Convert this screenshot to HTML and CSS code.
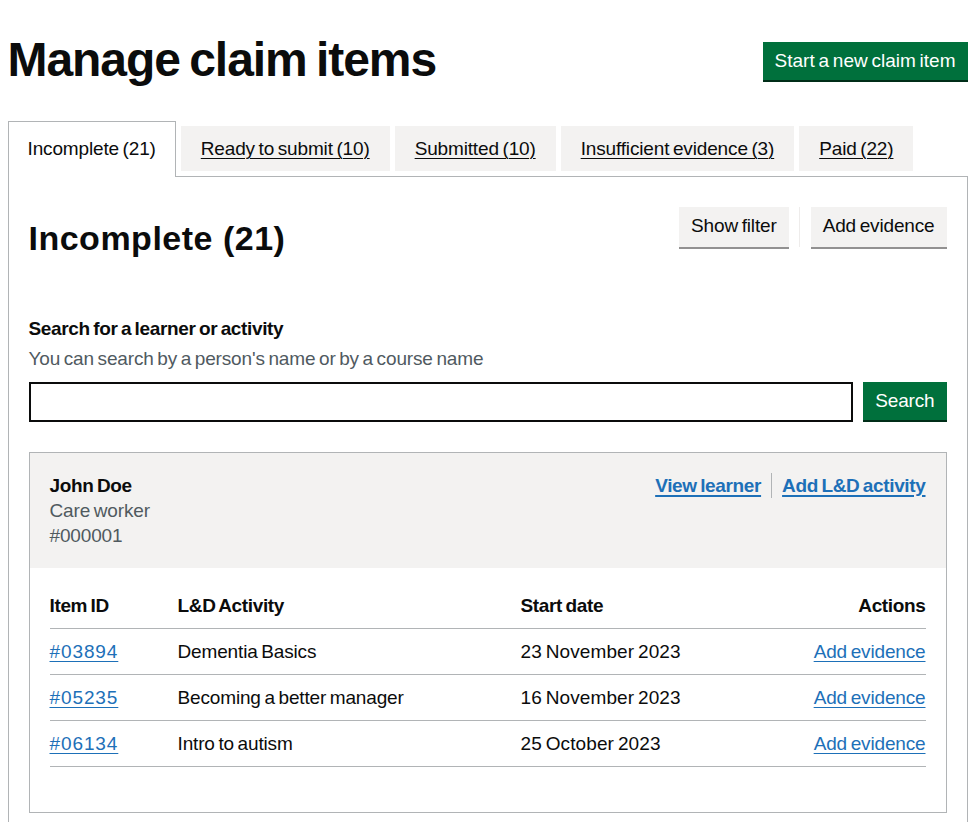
FILE: index.html
```html
<!DOCTYPE html>
<html lang="en">
<head>
<meta charset="utf-8">
<title>Manage claim items</title>
<link rel="stylesheet" href="styles.css">
</head>
<body>
<div class="container">
  <div class="page-header">
    <h1 class="heading-xl">Manage claim items</h1>
    <a class="button button-primary start-button" href="#">Start a new claim item</a>
  </div>

  <div class="tabs">
    <ul class="tabs-list">
      <li class="tab tab-selected"><a class="tab-link" href="#">Incomplete (21)</a></li>
      <li class="tab"><a class="tab-link" href="#">Ready to submit (10)</a></li>
      <li class="tab"><a class="tab-link" href="#">Submitted (10)</a></li>
      <li class="tab"><a class="tab-link" href="#">Insufficient evidence (3)</a></li>
      <li class="tab"><a class="tab-link" href="#">Paid (22)</a></li>
    </ul>

    <div class="panel">
      <div class="panel-header">
        <h2 class="heading-l">Incomplete (21)</h2>
        <div class="button-group">
          <a class="button button-secondary" href="#">Show filter</a>
          <span class="button-divider"></span>
          <a class="button button-secondary" href="#">Add evidence</a>
        </div>
      </div>

      <div class="search">
        <label class="label" for="search">Search for a learner or activity</label>
        <div class="hint">You can search by a person's name or by a course name</div>
        <div class="search-row">
          <input class="input" id="search" type="text">
          <a class="button button-primary search-button" href="#">Search</a>
        </div>
      </div>

      <div class="learner-card">
        <div class="learner-header">
          <div class="learner-info">
            <div class="learner-name">John Doe</div>
            <div class="learner-meta">Care worker</div>
            <div class="learner-meta">#000001</div>
          </div>
          <ul class="learner-actions">
            <li><a class="link link-bold" href="#">View learner</a></li>
            <li class="with-divider"><a class="link link-bold" href="#">Add L&amp;D activity</a></li>
          </ul>
        </div>
        <div class="learner-body">
          <table class="table">
            <colgroup>
              <col class="col-id">
              <col class="col-activity">
              <col class="col-date">
              <col class="col-actions">
            </colgroup>
            <thead>
              <tr>
                <th>Item ID</th>
                <th>L&amp;D Activity</th>
                <th>Start date</th>
                <th class="cell-right">Actions</th>
              </tr>
            </thead>
            <tbody>
              <tr>
                <td><a class="link link-num" href="#">#03894</a></td>
                <td>Dementia Basics</td>
                <td class="cell-date">23 November 2023</td>
                <td class="cell-right"><a class="link" href="#">Add evidence</a></td>
              </tr>
              <tr>
                <td><a class="link link-num" href="#">#05235</a></td>
                <td>Becoming a better manager</td>
                <td class="cell-date">16 November 2023</td>
                <td class="cell-right"><a class="link" href="#">Add evidence</a></td>
              </tr>
              <tr>
                <td><a class="link link-num" href="#">#06134</a></td>
                <td>Intro to autism</td>
                <td class="cell-date">25 October 2023</td>
                <td class="cell-right"><a class="link" href="#">Add evidence</a></td>
              </tr>
            </tbody>
          </table>
        </div>
      </div>
    </div>
  </div>
</div>
</body>
</html>
```

FILE: styles.css
```css
* {
  box-sizing: border-box;
}

html, body {
  margin: 0;
  padding: 0;
  background: #ffffff;
}

body {
  font-family: "Liberation Sans", Arial, sans-serif;
  font-size: 19px;
  line-height: 25px;
  color: #0b0c0c;
  letter-spacing: -0.15px;
  word-spacing: -1.5px;
}

.container {
  width: 960px;
  margin: 0 auto;
}

/* Page header */
.page-header {
  display: flex;
  justify-content: space-between;
  align-items: flex-start;
  padding-top: 35px;
}

.heading-xl {
  margin: 0;
  font-size: 48px;
  line-height: 50px;
  font-weight: 700;
  letter-spacing: -1.05px;
  word-spacing: -3px;
}

.start-button {
  margin-top: 7px;
  padding-left: 11px;
  padding-right: 11px;
  letter-spacing: 0;
}

/* Buttons */
.button {
  display: inline-block;
  font-size: 19px;
  line-height: 25px;
  padding: 6px 12px 7px;
  text-decoration: none;
  white-space: nowrap;
}

.button-primary {
  background: #00703c;
  color: #ffffff;
  box-shadow: 0 2px 0 #002d18;
}

.button-secondary {
  background: #f3f2f1;
  color: #0b0c0c;
  box-shadow: 0 2px 0 #929191;
}

/* Tabs */
.tabs {
  margin-top: 41px;
}

.tabs-list {
  display: flex;
  align-items: flex-start;
  list-style: none;
  margin: 0;
  padding: 0;
}

.tab {
  margin-right: 5px;
  padding: 10px 20px;
  background: #f3f2f1;
}

.tab-link {
  color: #0b0c0c;
  text-decoration: underline;
  text-decoration-thickness: 1px;
  text-underline-offset: 3px;
}

.tab-selected {
  position: relative;
  z-index: 1;
  margin-top: -5px;
  margin-bottom: -1px;
  padding: 14px 19px 16px;
  border: 1px solid #b1b4b6;
  border-bottom: 0;
  background: #ffffff;
}

.tab-selected .tab-link {
  text-decoration: none;
}

.panel {
  border: 1px solid #b1b4b6;
  padding: 30px 20px 30px;
}

.panel-header {
  display: flex;
  justify-content: space-between;
  align-items: flex-start;
  margin-bottom: 58px;
}

.heading-l {
  margin: 11px 0 0;
  font-size: 34px;
  line-height: 40px;
  font-weight: 700;
  letter-spacing: 0.5px;
  word-spacing: 0;
}

.button-group {
  display: flex;
  align-items: stretch;
}

.button-divider {
  width: 1px;
  margin: 0 11px 0 10px;
  background: #eeeceb;
  height: 40px;
}

/* Search */
.label {
  display: block;
  font-weight: 700;
  margin-bottom: 5px;
  letter-spacing: -0.35px;
}

.hint {
  color: #505a5f;
  margin-bottom: 11px;
}

.search-row {
  display: flex;
  align-items: flex-start;
  gap: 10px;
}

.input {
  flex: 1;
  height: 40px;
  border: 2px solid #0b0c0c;
  border-radius: 0;
  padding: 5px;
  font: inherit;
  margin: 0;
}

.search-button {
  padding-left: 12px;
  padding-right: 12px;
}

/* Learner card */
.learner-card {
  margin-top: 30px;
  border: 1px solid #b1b4b6;
}

.learner-header {
  display: flex;
  justify-content: space-between;
  align-items: flex-start;
  background: #f3f2f1;
  padding: 20px;
}

.learner-name {
  font-weight: 700;
  letter-spacing: -0.35px;
}

.learner-meta {
  color: #505a5f;
}

.learner-actions {
  display: flex;
  list-style: none;
  margin: 0;
  padding: 0;
}

.with-divider {
  margin-left: 10px;
  padding-left: 10px;
  border-left: 1px solid #b1b4b6;
}

.link {
  color: #1d70b8;
  text-decoration: underline;
  text-decoration-thickness: 1px;
  text-underline-offset: 3px;
}

.link-bold {
  font-weight: 700;
  letter-spacing: -0.35px;
  text-decoration-thickness: 2px;
}

.link-num {
  letter-spacing: 0.9px;
}

.learner-body {
  padding: 15px 20px;
}

.table {
  width: 100%;
  border-collapse: collapse;
  table-layout: fixed;
  margin-bottom: 30px;
}

.col-id {
  width: 128px;
}

.col-activity {
  width: 343px;
}

.col-actions {
  width: 150px;
}

.table th,
.table td {
  padding: 10px 20px 10px 0;
  border-bottom: 1px solid #b1b4b6;
  text-align: left;
  vertical-align: top;
}

.table th {
  font-weight: 700;
  letter-spacing: -0.35px;
}

.table .cell-date {
  letter-spacing: 0.1px;
}

.table .cell-right {
  text-align: right;
  padding-right: 0;
}
```
